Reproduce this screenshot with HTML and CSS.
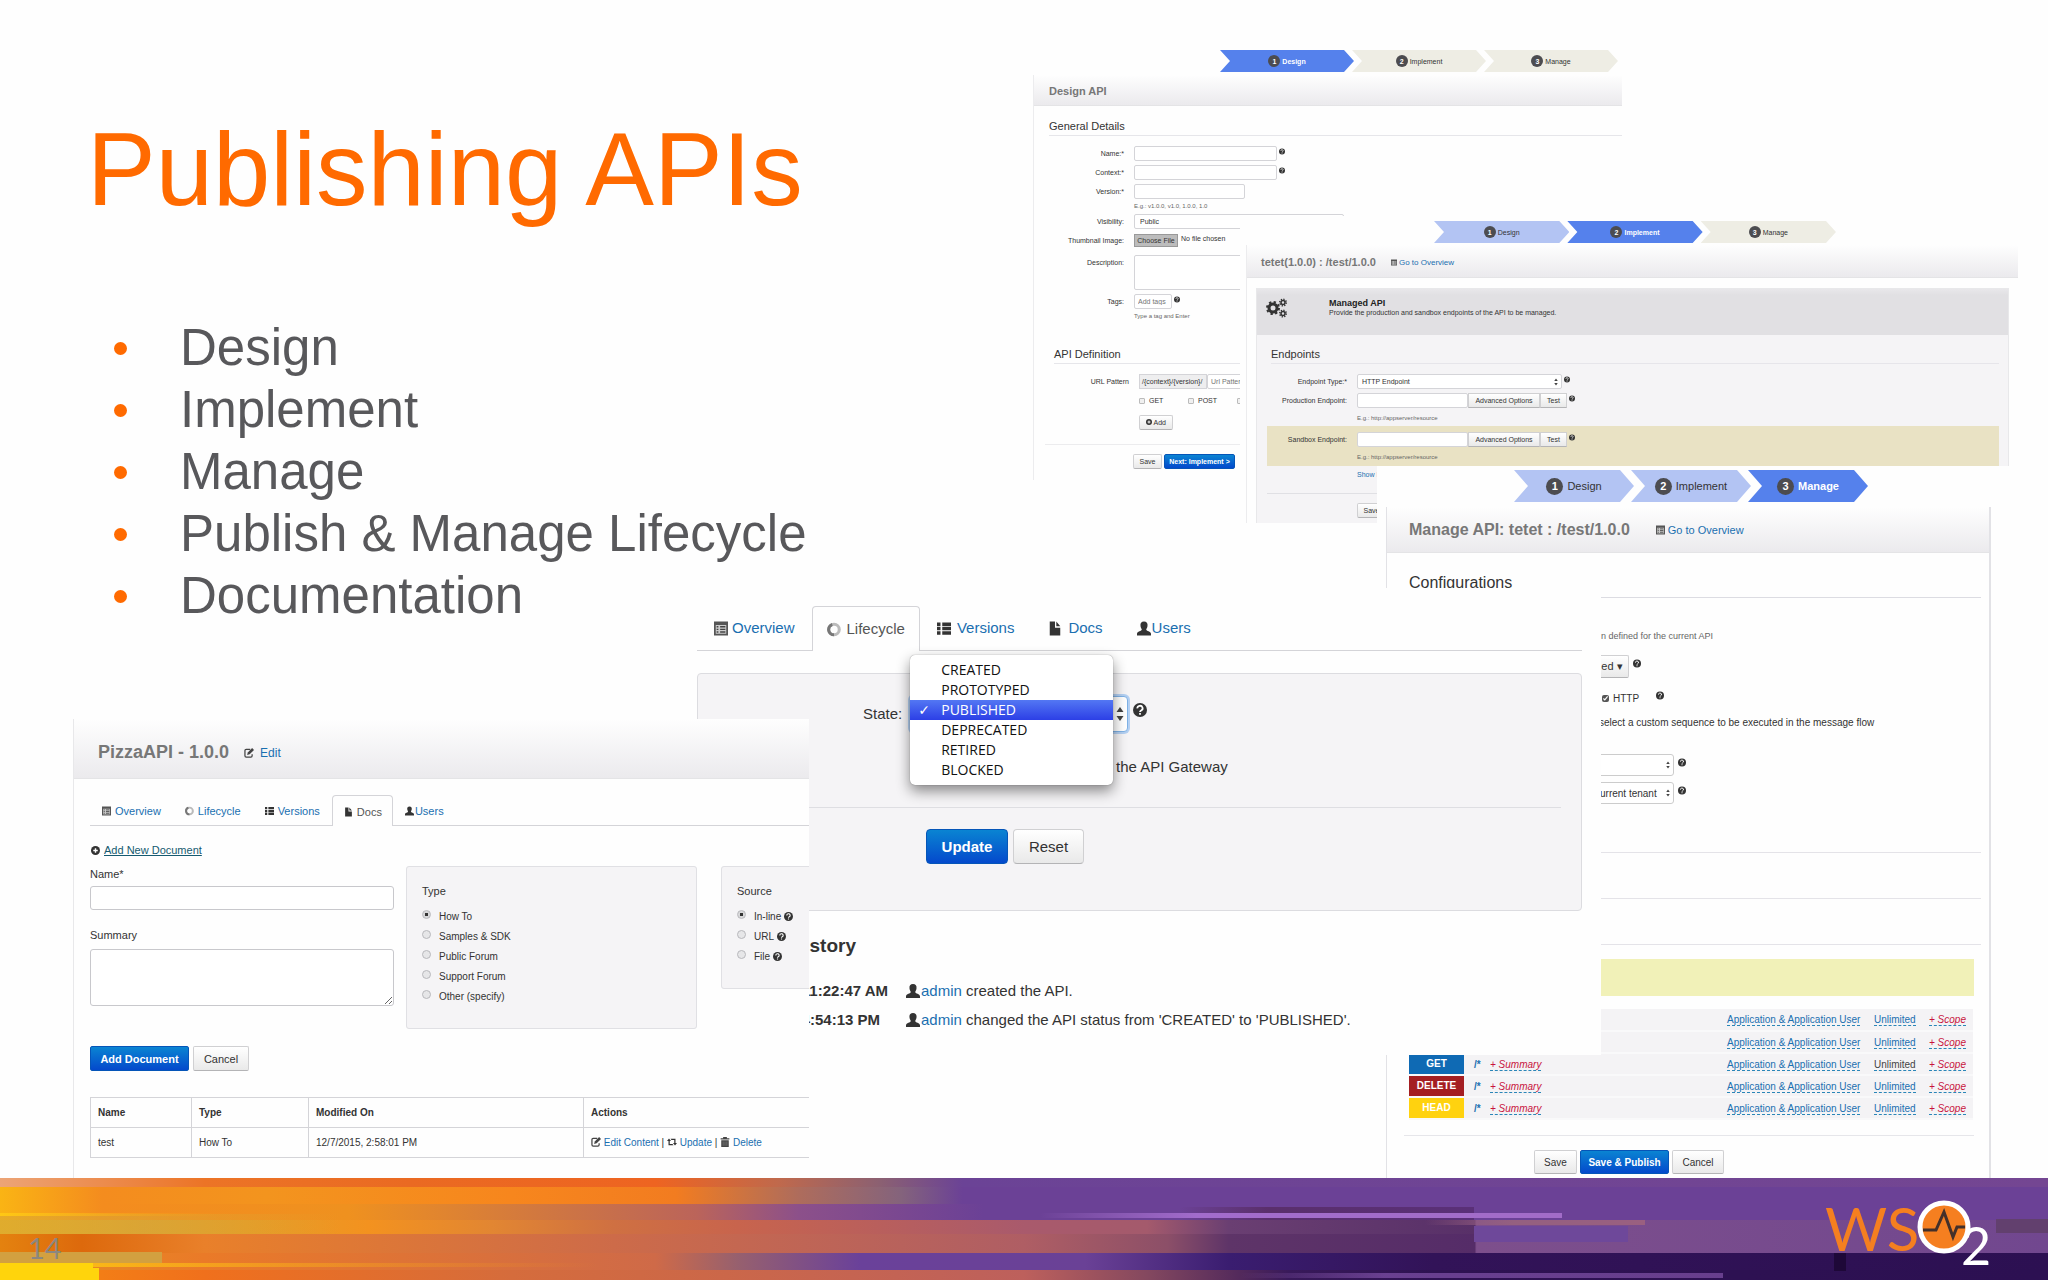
FILE: index.html
```html
<!DOCTYPE html>
<html lang="en">
<head>
  <meta charset="UTF-8" />
  <title>Publishing APIs</title>
  <link rel="stylesheet" href="styles.css">
</head>
<body>
  <!-- icons shared by all windows -->
  <svg class="sprite" aria-hidden="true">
    <symbol id="help" viewBox="0 0 16 16"><circle cx="8" cy="8" r="8" fill="#333"/><path d="M5 6.200a3 2.800 0 1 1 4.300 2.300q-1.300.7-1.300 1.800M8 11.500v2" stroke="#fff" stroke-width="2" fill="none"/></symbol>
    <symbol id="list" viewBox="0 0 16 16"><path d="M0 0h16v16H0z" fill="#555"/><path d="M2 4h12v10H2z" fill="#ccc"/><path d="M3 6h2M3 9h2M3 12h2M7 6h6M7 9h6M7 12h6" stroke="#444" stroke-width="1.500"/></symbol>
    <symbol id="spin" viewBox="0 0 16 16"><circle cx="8" cy="8" r="6" fill="none" stroke="#bbb" stroke-width="3.500"/><path d="M8 14a6 6 0 0 1-2-11.700" fill="none" stroke="#777" stroke-width="3.500"/></symbol>
    <symbol id="rows" viewBox="0 0 16 16"><path d="M0 1h4v4H0zM6 1h10v4H6zM0 6h4v4H0zM6 6h10v4H6zM0 11h4v4H0zM6 11h10v4H6z" fill="#333"/></symbol>
    <symbol id="file" viewBox="0 0 16 16"><path d="M2 0h6v7h6v9H2zM9.500 0L14 5.500H9.500z" fill="#333"/></symbol>
    <symbol id="user" viewBox="0 0 16 16"><path d="M8 0c3 0 4.500 2 4 5-.3 2-1 3-1.500 4 0 2 5.500 2 5.500 5v2H0v-2c0-3 5.500-3 5.500-5C5 8 4.300 7 4 5c-.5-3 1-5 4-5z" fill="#333"/></symbol>
    <symbol id="edit" viewBox="0 0 16 16"><path d="M10 2H3.500Q1.500 2 1.500 4v8.500q0 2 2 2H11q2 0 2-2V10" fill="none" stroke="#444" stroke-width="2"/><path d="M5 11l1-4 7-7 3 3-7 7z" fill="#444"/></symbol>
    <symbol id="plus" viewBox="0 0 16 16"><circle cx="8" cy="8" r="8" fill="#333"/><path d="M8 4v8M4 8h8" stroke="#fff" stroke-width="2.500"/></symbol>
    <symbol id="retweet" viewBox="0 0 20 16"><path d="M0 6l4-5 4 5H5.500v6H11l2 2.500H3V6zM20 10l-4 5-4-5h2.500V4H9L7 1.500h10V10z" fill="#333"/></symbol>
    <symbol id="trash" viewBox="0 0 16 16"><path d="M5 0h6v2h4v2H1V2h4zM2 5h12v11H2z" fill="#444"/><path d="M5 7v7M8 7v7M11 7v7" stroke="#888"/></symbol>
    <symbol id="updown" viewBox="0 0 8 16"><path d="M4 1l3.500 5h-7zM4 15L.5 10h7z" fill="#444"/></symbol>
    <symbol id="gears" viewBox="0 0 44 40">
      <g fill="none" stroke="#333"><circle cx="14" cy="20" r="8" stroke-width="6"/><circle cx="14" cy="20" r="12" stroke-width="4" stroke-dasharray="4.700 4.700"/>
      <circle cx="34" cy="9" r="4" stroke-width="3"/><circle cx="34" cy="9" r="6.500" stroke-width="3" stroke-dasharray="2.500 2.600"/>
      <circle cx="34" cy="31" r="4" stroke-width="3"/><circle cx="34" cy="31" r="6.500" stroke-width="3" stroke-dasharray="2.500 2.600"/></g>
    </symbol>
  </svg>

  <main class="slide">
    <div class="intro">
      <h1>Publishing APIs</h1>
      <ul>
        <li>Design</li>
        <li>Implement</li>
        <li>Manage</li>
        <li>Publish &amp; Manage Lifecycle</li>
        <li>Documentation</li>
      </ul>
    </div>

    <!-- Design window -->
    <section class="shot design">
      <ol class="stepper">
        <li class="current"><b>1</b>Design</li>
        <li class="todo"><b>2</b>Implement</li>
        <li class="todo"><b>3</b>Manage</li>
      </ol>
      <div class="window">
        <header class="bar"><h2>Design API</h2></header>
        <h3>General Details</h3>
        <form class="form">
          <div class="row"><label for="name">Name:*</label><input class="wide" id="name" type="text"><svg class="help"><use href="#help"/></svg></div>
          <div class="row"><label for="context">Context:*</label><input class="wide" id="context" type="text"><svg class="help"><use href="#help"/></svg></div>
          <div class="row"><label for="version">Version:*</label><input class="mid" id="version" type="text"></div>
          <p class="hint">E.g.: v1.0.0, v1.0, 1.0.0, 1.0</p>
          <div class="row"><label for="visibility">Visibility:</label><select class="visibility" id="visibility"><option>Public</option></select></div>
          <div class="row"><label for="thumb">Thumbnail Image:</label><button class="file-btn" id="thumb" type="button">Choose File</button><span class="file-name">No file chosen</span></div>
          <div class="row tall spaced"><label for="desc">Description:</label><textarea id="desc"></textarea></div>
          <div class="row"><label for="tags">Tags:</label><input class="tags" id="tags" type="text" placeholder="Add tags"><svg class="help"><use href="#help"/></svg></div>
          <p class="hint">Type a tag and Enter</p>
        </form>
        <h3 class="definition">API Definition</h3>
        <form class="form indent">
          <div class="row"><label for="url">URL Pattern</label><span class="addon">/{context}/{version}/</span><input class="url" id="url" type="text" placeholder="Url Pattern"></div>
          <div class="checks">
            <label><input type="checkbox">GET</label>
            <label><input type="checkbox">POST</label>
            <label><input type="checkbox">PUT</label>
          </div>
          <div class="row spaced add"><button type="button" class="btn"><svg><use href="#plus"/></svg> Add</button></div>
        </form>
        <div class="actions"><button class="btn">Save</button><button class="btn primary">Next: Implement &gt;</button></div>
      </div>
    </section>

    <!-- Implement window -->
    <section class="shot implement">
      <ol class="stepper">
        <li class="done"><b>1</b>Design</li>
        <li class="current"><b>2</b>Implement</li>
        <li class="todo"><b>3</b>Manage</li>
      </ol>
      <div class="window">
        <header class="bar"><h2>tetet(1.0.0) : /test/1.0.0</h2><svg><use href="#list"/></svg><a href="#">Go to Overview</a></header>
        <div class="panel">
          <div class="managed">
            <svg><use href="#gears"/></svg>
            <div>
              <strong>Managed API</strong>
              <p>Provide the production and sandbox endpoints of the API to be managed.</p>
            </div>
          </div>
          <h3>Endpoints</h3>
          <form class="form">
            <div class="row"><label for="etype">Endpoint Type:*</label><span class="select"><select id="etype"><option>HTTP Endpoint</option></select><svg><use href="#updown"/></svg></span><svg class="help"><use href="#help"/></svg></div>
            <div class="row"><label for="prod">Production Endpoint:</label><input id="prod" type="text"><button type="button" class="btn adv">Advanced Options</button><button type="button" class="btn test">Test</button><svg class="help"><use href="#help"/></svg></div>
            <p class="hint">E.g.: http://appserver/resource</p>
            <div class="band">
              <div class="row"><label for="sand">Sandbox Endpoint:</label><input id="sand" type="text"><button type="button" class="btn adv">Advanced Options</button><button type="button" class="btn test">Test</button><svg class="help"><use href="#help"/></svg></div>
              <p class="hint">E.g.: http://appserver/resource</p>
            </div>
            <a class="more" href="#">Show More Options</a>
          </form>
          <div class="actions"><button class="btn">Save</button></div>
        </div>
      </div>
    </section>

    <!-- Manage window -->
    <section class="shot manage">
      <ol class="stepper">
        <li class="done"><b>1</b>Design</li>
        <li class="done"><b>2</b>Implement</li>
        <li class="current"><b>3</b>Manage</li>
      </ol>
      <div class="window">
        <header class="bar"><h2>Manage API: tetet : /test/1.0.0</h2><svg><use href="#list"/></svg><a href="#">Go to Overview</a></header>
        <h3>Configurations</h3>
        <div class="config">
          <p class="note">n defined for the current API</p>
          <div class="line"><button class="btn drop">ed ▾</button><svg class="help"><use href="#help"/></svg></div>
          <div class="line http"><label><input type="checkbox" checked>HTTP</label><svg class="help"><use href="#help"/></svg></div>
          <p class="message">select a custom sequence to be executed in the message flow</p>
          <div class="line"><span class="select"><select aria-label="Sequence"><option></option></select><svg><use href="#updown"/></svg></span><svg class="help"><use href="#help"/></svg></div>
          <div class="line"><span class="select"><select aria-label="Subscriptions"><option>urrent tenant</option></select><svg><use href="#updown"/></svg></span><svg class="help"><use href="#help"/></svg></div>
        </div>
        <hr><hr><hr>
        <div class="notice"></div>
        <table class="resources">
          <tr><td><span class="verb get">POST</span></td><td><a class="path" href="#">/*</a></td><td><a class="red" href="#">+ Summary</a></td><td><a href="#">Application &amp; Application User</a></td><td><a href="#">Unlimited</a></td><td><a class="red" href="#">+ Scope</a></td></tr>
          <tr><td><span class="verb get">PUT</span></td><td><a class="path" href="#">/*</a></td><td><a class="red" href="#">+ Summary</a></td><td><a href="#">Application &amp; Application User</a></td><td><a href="#">Unlimited</a></td><td><a class="red" href="#">+ Scope</a></td></tr>
          <tr><td><span class="verb get">GET</span></td><td><a class="path" href="#">/*</a></td><td><a class="red" href="#">+ Summary</a></td><td><a href="#">Application &amp; Application User</a></td><td><a class="dark" href="#">Unlimited</a></td><td><a class="red" href="#">+ Scope</a></td></tr>
          <tr><td><span class="verb delete">DELETE</span></td><td><a class="path" href="#">/*</a></td><td><a class="red" href="#">+ Summary</a></td><td><a href="#">Application &amp; Application User</a></td><td><a href="#">Unlimited</a></td><td><a class="red" href="#">+ Scope</a></td></tr>
          <tr><td><span class="verb head">HEAD</span></td><td><a class="path" href="#">/*</a></td><td><a class="red" href="#">+ Summary</a></td><td><a href="#">Application &amp; Application User</a></td><td><a href="#">Unlimited</a></td><td><a class="red" href="#">+ Scope</a></td></tr>
        </table>
        <div class="actions"><button class="btn">Save</button><button class="btn primary">Save &amp; Publish</button><button class="btn">Cancel</button></div>
      </div>
    </section>

    <!-- Lifecycle window -->
    <section class="shot lifecycle">
      <nav class="tabs">
        <a href="#" class="overview"><svg><use href="#list"/></svg>Overview</a>
        <a href="#" class="active"><svg><use href="#spin"/></svg>Lifecycle</a>
        <a href="#"><svg><use href="#rows"/></svg>Versions</a>
        <a href="#"><svg><use href="#file"/></svg>Docs</a>
        <a href="#" class="users"><svg><use href="#user"/></svg>Users</a>
      </nav>
      <div class="panel">
        <div class="state">
          <label for="state">State:</label>
          <span class="select"><select id="state"><option>PUBLISHED</option></select><svg><use href="#updown"/></svg>
            <ul class="menu">
              <li>CREATED</li>
              <li>PROTOTYPED</li>
              <li class="picked">PUBLISHED</li>
              <li>DEPRECATED</li>
              <li>RETIRED</li>
              <li>BLOCKED</li>
            </ul>
          </span>
          <svg class="help"><use href="#help"/></svg>
        </div>
        <p class="gateway">the API Gateway</p>
        <div class="actions"><button class="btn primary">Update</button><button class="btn">Reset</button></div>
      </div>
      <h3>story</h3>
      <ul class="history">
        <li><b>11:22:47 AM</b><svg><use href="#user"/></svg><span><a href="#">admin</a> created the API.</span></li>
        <li><b class="short">4:54:13 PM</b><svg><use href="#user"/></svg><span><a href="#">admin</a> changed the API status from 'CREATED' to 'PUBLISHED'.</span></li>
      </ul>
    </section>

    <!-- Docs window -->
    <section class="shot docs">
      <header class="bar"><h2>PizzaAPI - 1.0.0</h2><svg><use href="#edit"/></svg><a href="#">Edit</a></header>
      <nav class="tabs">
        <a href="#"><svg><use href="#list"/></svg>Overview</a>
        <a href="#"><svg><use href="#spin"/></svg>Lifecycle</a>
        <a href="#"><svg><use href="#rows"/></svg>Versions</a>
        <a href="#" class="active"><svg><use href="#file"/></svg>Docs</a>
        <a href="#" class="users"><svg><use href="#user"/></svg>Users</a>
      </nav>
      <div class="add-doc"><svg><use href="#plus"/></svg><a href="#">Add New Document</a></div>
      <form class="doc-form">
        <div class="fields">
          <label for="docname">Name*</label>
          <input id="docname" type="text">
          <label for="summary">Summary</label>
          <textarea id="summary"></textarea>
        </div>
        <fieldset class="type">
          <p>Type</p>
          <label><input type="radio" name="type" checked>How To</label>
          <label><input type="radio" name="type">Samples &amp; SDK</label>
          <label><input type="radio" name="type">Public Forum</label>
          <label><input type="radio" name="type">Support Forum</label>
          <label><input type="radio" name="type">Other (specify)</label>
        </fieldset>
        <fieldset class="source">
          <p>Source</p>
          <label><input type="radio" name="source" checked>In-line <svg><use href="#help"/></svg></label>
          <label><input type="radio" name="source">URL <svg><use href="#help"/></svg></label>
          <label><input type="radio" name="source">File <svg><use href="#help"/></svg></label>
        </fieldset>
      </form>
      <div class="actions"><button class="btn primary">Add Document</button><button class="btn">Cancel</button></div>
      <table class="doc-table">
        <thead>
          <tr><th class="c-name">Name</th><th class="c-type">Type</th><th class="c-mod">Modified On</th><th>Actions</th></tr>
        </thead>
        <tbody>
          <tr><td>test</td><td>How To</td><td>12/7/2015, 2:58:01 PM</td><td><svg><use href="#edit"/></svg> <a href="#">Edit Content</a> | <svg><use href="#retweet"/></svg> <a href="#">Update</a> | <svg><use href="#trash"/></svg> <a href="#">Delete</a></td></tr>
        </tbody>
      </table>
    </section>
  </main>

  <footer class="footer">
    <svg class="streaks" viewBox="0 0 2048 102" preserveAspectRatio="none" aria-hidden="true">
      <defs>
        <linearGradient id="s1"><stop offset="0" stop-color="#eca476"/><stop offset=".1" stop-color="#ec7426"/><stop offset=".2" stop-color="#ea6a22"/><stop offset=".32" stop-color="#ee6421"/><stop offset=".38" stop-color="#c0694c"/><stop offset=".43" stop-color="#8b6072"/><stop offset=".47" stop-color="#6b4396"/><stop offset="1" stop-color="#744692"/></linearGradient>
        <linearGradient id="s2"><stop offset="0" stop-color="#fab414"/><stop offset=".05" stop-color="#f48c1e"/><stop offset=".13" stop-color="#f3941e"/><stop offset=".25" stop-color="#f7861d"/><stop offset=".33" stop-color="#f27c20"/><stop offset=".39" stop-color="#ae6c5c"/><stop offset=".44" stop-color="#84637c"/><stop offset=".47" stop-color="#6b4196"/><stop offset="1" stop-color="#6b4196"/></linearGradient>
        <linearGradient id="s3"><stop offset="0" stop-color="#fab414"/><stop offset=".05" stop-color="#f48c1e"/><stop offset=".17" stop-color="#ef911f"/><stop offset=".27" stop-color="#cf7642"/><stop offset=".34" stop-color="#bb645a"/><stop offset=".39" stop-color="#8c508a"/><stop offset=".48" stop-color="#6b4196"/><stop offset="1" stop-color="#6b4196"/></linearGradient>
        <linearGradient id="s4"><stop offset="0" stop-color="#e6b524"/><stop offset=".07" stop-color="#d9a236"/><stop offset=".12" stop-color="#e59c28"/><stop offset=".18" stop-color="#f3921f"/><stop offset=".24" stop-color="#e28632"/><stop offset=".3" stop-color="#cf7042"/><stop offset=".36" stop-color="#c8644d"/><stop offset=".5" stop-color="#a95a6c"/><stop offset=".56" stop-color="#a45a6c"/><stop offset=".6" stop-color="#6a3f72"/><stop offset=".72" stop-color="#583068"/><stop offset=".721" stop-color="#7d4f8c"/><stop offset="1" stop-color="#71478f"/></linearGradient>
        <linearGradient id="s5"><stop offset="0" stop-color="#e4820f"/><stop offset=".04" stop-color="#dd690c"/><stop offset=".1" stop-color="#e9802a"/><stop offset=".3" stop-color="#cd6b49"/><stop offset=".5" stop-color="#af5e64"/><stop offset=".57" stop-color="#8c4f68"/><stop offset=".6" stop-color="#5e3468"/><stop offset=".72" stop-color="#552c68"/><stop offset=".721" stop-color="#7d4f8c"/><stop offset="1" stop-color="#71478f"/></linearGradient>
        <linearGradient id="s6"><stop offset="0" stop-color="#e59020"/><stop offset=".1" stop-color="#ea7a28"/><stop offset=".32" stop-color="#cf6a48"/><stop offset=".36" stop-color="#97606e"/><stop offset=".42" stop-color="#6a419a"/><stop offset=".53" stop-color="#6a4196"/><stop offset=".6" stop-color="#3a1d70"/><stop offset=".7" stop-color="#321358"/><stop offset="1" stop-color="#2c1052"/></linearGradient>
        <linearGradient id="s7"><stop offset="0" stop-color="#f68a10"/><stop offset=".1" stop-color="#f0701c"/><stop offset=".25" stop-color="#d56c3c"/><stop offset=".5" stop-color="#bd605c"/><stop offset=".56" stop-color="#84485f"/><stop offset=".63" stop-color="#38195a"/><stop offset=".7" stop-color="#2e1252"/><stop offset="1" stop-color="#2c1052"/></linearGradient>
        <linearGradient id="yl"><stop offset="0" stop-color="#ffc814"/><stop offset="1" stop-color="#f3941e" stop-opacity="0"/></linearGradient>
        <linearGradient id="ol"><stop offset="0" stop-color="#dba633"/><stop offset=".4" stop-color="#dba633"/><stop offset="1" stop-color="#dba633" stop-opacity="0"/></linearGradient>
        <linearGradient id="dk"><stop offset="0" stop-color="#5a2f66" stop-opacity="0"/><stop offset=".3" stop-color="#5a2f6c"/><stop offset="1" stop-color="#5a3078"/></linearGradient>
        <linearGradient id="lt"><stop offset="0" stop-color="#a873cf" stop-opacity="0"/><stop offset=".3" stop-color="#a26ccc"/><stop offset="1" stop-color="#a26cc8"/></linearGradient>
        <linearGradient id="bg"><stop offset="0" stop-color="#9a6080" stop-opacity="0"/><stop offset=".4" stop-color="#946080"/><stop offset="1" stop-color="#9a6080"/></linearGradient>
      </defs>
      <rect width="2048" height="9" fill="url(#s1)"/>
      <rect y="9" width="2048" height="17" fill="url(#s2)"/>
      <rect y="26" width="2048" height="16" fill="url(#s3)"/>
      <rect y="42" width="2048" height="14" fill="url(#s4)"/>
      <rect y="36" width="340" height="20" fill="url(#ol)" opacity=".6"/>
      <rect y="35" width="240" height="3" fill="url(#yl)"/>
      <rect y="56" width="2048" height="19" fill="url(#s5)"/>
      <rect y="75" width="2048" height="17" fill="url(#s6)"/>
      <rect y="74" width="162" height="11" fill="#d2a040"/>
      <rect y="92" width="2048" height="10" fill="url(#s7)"/>
      <rect y="85" width="600" height="4" fill="url(#yl)"/>
      <path d="M0 85h93v5h6v12H0z" fill="#ffd40c"/>
      <rect x="1180" y="29" width="294" height="13" fill="url(#dk)"/>
      <rect x="1040" y="35" width="522" height="5" fill="url(#lt)"/>
      <rect x="1425" y="42" width="220" height="5" fill="url(#bg)"/>
      <rect x="1474" y="48" width="154" height="16" fill="#6e489a"/>
      <rect x="1996" y="41" width="52" height="14" fill="#62406e"/>
      <rect x="1834" y="75" width="12" height="18" fill="#1e0838"/>
      <rect x="1240" y="95" width="483" height="5" fill="url(#lt)" opacity=".5"/>
    </svg>
    <span class="page-no">14</span>
    <svg class="logo" viewBox="0 0 170 90" role="img" aria-label="WSO2">
      <text class="logo-ws" x="0" y="62">WS</text>
      <text class="logo-two" x="136" y="76">2</text>
      <circle cx="119" cy="38" r="24" fill="#f57f20" stroke="#fff" stroke-width="5"/>
      <path d="M98 41h13l8-18 9 25 4-10h8" fill="none" stroke="#43302a" stroke-width="3"/>
    </svg>
  </footer>
</body>
</html>
```
FILE: styles.css
```css
* {
  box-sizing: border-box;
}

body {
  margin: 0;
  min-height: 100vh;
  display: flex;
  flex-direction: column;
  background: #fefefe;
  color: #333;
  font-family: "Liberation Sans", Arial, sans-serif;
  overflow-x: hidden;
}

h1, h2, h3, p, ul, ol, fieldset {
  margin: 0;
  padding: 0;
  border: 0;
}

ul, ol {
  list-style: none;
}

a {
  color: #1a6fb0;
  text-decoration: none;
}

button, input, select, textarea {
  font: inherit;
  color: inherit;
}

.sprite {
  position: absolute;
  width: 0;
  height: 0;
}

/* slide text */
.slide {
  position: relative;
  flex: 1;
}

.intro {
  padding: 110px 0 0 87px;
}

.intro h1 {
  font-size: 103px;
  line-height: 120px;
  font-weight: normal;
  color: #ff6a00;
}

.intro ul {
  padding: 87px 0 0 27px;
}

.intro li {
  display: flex;
  align-items: center;
  gap: 53px;
  font-size: 51px;
  line-height: 62px;
  color: #58585b;
}

.intro li::before {
  content: "";
  width: 13px;
  height: 13px;
  border-radius: 50%;
  background: #ff6a00;
}

/* windows scattered over the slide */
.shot {
  position: absolute;
  overflow: hidden;
  background: #fefefe;
}

.design {
  top: 45px;
  right: 426px;
  width: 589px;
  height: 435px;
  font-size: 7px;
}

.implement {
  top: 216px;
  right: 30px;
  width: 778px;
  height: 307px;
  font-size: 7px;
}

.manage {
  top: 466px;
  right: 20px;
  width: 651px;
  height: 712px;
  font-size: 10px;
}

.lifecycle {
  top: 588px;
  left: 697px;
  width: 904px;
  height: 467px;
  font-size: 15px;
}

.docs {
  top: 719px;
  left: 73px;
  width: 736px;
  height: 459px;
  font-size: 11px;
  border-left: 1px solid #e8e8ea;
}

/* shared parts */
.bar {
  display: flex;
  align-items: center;
  background: linear-gradient(#fefefe, #ebeaed);
  border-bottom: 1px solid #e4e4e6;
}

.bar h2 {
  color: #777;
  font-weight: bold;
}

h3 {
  display: flex;
  align-items: flex-end;
  font-weight: normal;
}

.stepper {
  display: flex;
}

.stepper li {
  flex: 1;
  display: flex;
  align-items: center;
  justify-content: center;
  margin-right: -2px;
  clip-path: polygon(0 0, calc(100% - 10px) 0, 100% 50%, calc(100% - 10px) 100%, 0 100%, 10px 50%);
}

.stepper b {
  display: flex;
  align-items: center;
  justify-content: center;
  width: 12px;
  height: 12px;
  margin-right: 2px;
  border-radius: 50%;
  background: #4c4c50;
  color: #fff;
}

.stepper .current {
  background: #5581ec;
  color: #fff;
  font-weight: bold;
}

.stepper .done {
  background: #b3c4f3;
}

.stepper .todo {
  background: #eeede4;
}

.btn {
  padding: 0;
  border: 1px solid #d0d0d2;
  border-bottom-color: #b4b4b6;
  border-radius: 2px;
  background: linear-gradient(#fff, #e9e9e9);
  white-space: nowrap;
}

.btn.primary {
  border-color: #0555b8;
  background: linear-gradient(#0a84d2, #0449cc);
  color: #fff;
  font-weight: bold;
}

.form .row {
  display: flex;
  align-items: center;
  height: 15px;
  margin-bottom: 4px;
}

.form .row.spaced {
  margin-top: 7px;
}

.form input[type="text"], .form select, .form textarea {
  height: 15px;
  padding: 0 5px;
  border: 1px solid #d4d4d8;
  border-radius: 2px;
  background: #fff;
  appearance: none;
  resize: none;
}

.help {
  width: 6px;
  height: 7px;
  margin: 0 0 4px 2px;
}

.hint {
  font-size: 6px;
  color: #666;
}

.select {
  position: relative;
  display: inline-flex;
}

.select > svg {
  position: absolute;
  top: 50%;
  right: 4px;
  width: 4px;
  height: 8px;
  margin-top: -4px;
}

/* design */
.design .stepper {
  width: 396px;
  height: 22px;
  margin: 5px 0 3px 187px;
}

.design .window {
  height: 405px;
  border-left: 1px solid #ececee;
}

.design .bar {
  height: 31px;
  padding: 2px 0 0 15px;
}

.design h2, .design h3, .implement h2, .implement h3 {
  font-size: 11px;
}

.design h3 {
  height: 30px;
  margin: 0 0 10px 15px;
  padding-bottom: 3px;
  border-bottom: 1px solid #e6e6ea;
}

.design h3.definition {
  height: 40px;
  margin: 0 0 10px 20px;
}

.design .row > label {
  width: 90px;
  margin-right: 10px;
  text-align: right;
}

.design .indent .row > label {
  width: 95px;
}

.design .wide {
  width: 143px;
}

.design .mid {
  width: 111px;
}

.design .visibility {
  width: 210px;
}

.design .hint {
  margin: 0 0 4px 100px;
  line-height: 7px;
}

.design .file-btn {
  width: 44px;
  height: 13px;
  padding: 0;
  border: 1px solid #999;
  background: #bcbcbc;
}

.design .file-name {
  margin: 0 0 4px 3px;
}

.design .tall {
  height: 35px;
  align-items: flex-start;
}

.design .tall label {
  line-height: 15px;
}

.design textarea {
  width: 210px;
  height: 35px;
}

.design .form .tags {
  width: 38px;
  padding: 0 3px;
}

.design .addon {
  width: 68px;
  height: 15px;
  padding: 0 2px;
  border: 1px solid #d4d4d8;
  background: #eeeeef;
  line-height: 13px;
}

.design .form .url {
  width: 110px;
  padding: 0 3px;
}

.checks {
  display: flex;
  height: 15px;
  padding-left: 105px;
}

.checks label {
  display: flex;
  align-items: center;
  width: 49px;
}

.checks input {
  appearance: none;
  width: 6px;
  height: 6px;
  margin: 0 4px 0 0;
  border: 1px solid #bbb;
  border-radius: 1px;
  background: #f0f0f0;
}

.design .add {
  padding-left: 105px;
}

.design .add .btn {
  width: 34px;
  height: 15px;
}

.design .add svg {
  width: 6px;
  height: 6px;
}

.design .actions {
  display: flex;
  gap: 2px;
  margin: 14px 0 0 11px;
  padding: 9px 0 0 88px;
  border-top: 1px solid #ececee;
}

.design .actions .btn {
  width: 29px;
  height: 15px;
}

.design .actions .primary {
  width: 71px;
}

/* implement */
.implement .stepper {
  width: 400px;
  height: 22px;
  margin: 5px 0 2px 194px;
}

.implement .window {
  margin-left: 6px;
  border-left: 1px solid #ececee;
}

.implement .bar {
  height: 33px;
  padding: 2px 0 0 14px;
}

.implement .bar svg {
  width: 6px;
  height: 7px;
  margin: 0 2px 0 15px;
}

.implement .bar a {
  font-size: 8px;
}

.implement .panel {
  height: 240px;
  margin: 10px 9px 0 9px;
  border: 1px solid #e8e8ea;
  background: #f5f4f6;
}

.implement .managed {
  display: flex;
  align-items: flex-start;
  gap: 41px;
  height: 46px;
  padding: 9px 9px;
  background: linear-gradient(#e8e7ea, #e1e0e3 6px);
}

.implement .managed svg {
  width: 22px;
  height: 20px;
}

.implement .managed strong {
  display: block;
  font-size: 9px;
  line-height: 10px;
  color: #222;
}

.implement .managed p {
  line-height: 9px;
}

.implement h3 {
  height: 29px;
  margin: 0 9px 10px 14px;
  padding-bottom: 3px;
  border-bottom: 1px solid #e6e5ea;
}

.implement .row label {
  width: 90px;
  margin-right: 10px;
  text-align: right;
}

.implement .select select {
  width: 205px;
  padding: 0 4px;
}

.implement .row input {
  width: 111px;
}

.implement .row .btn {
  height: 15px;
  border-radius: 0;
}

.implement .row .adv {
  width: 72px;
}

.implement .row .test {
  width: 27px;
}

.implement .hint {
  padding-left: 100px;
  line-height: 13px;
}

.implement .band {
  height: 40px;
  margin: 1px 9px 0 10px;
  padding: 6px 0 0 0;
  background: #e9e2c4;
}

.implement .band label {
  width: 80px;
}

.implement .band .hint {
  padding-left: 90px;
}

.implement .more {
  display: block;
  padding-left: 100px;
  line-height: 17px;
}

.implement .actions {
  margin: 10px 9px 0 10px;
  padding: 9px 0 0 90px;
  border-top: 1px solid #e0e0e4;
}

.implement .actions .btn {
  width: 29px;
  height: 15px;
}

/* manage */
.manage .stepper {
  width: 351px;
  height: 32px;
  margin: 4px 0 5px 137px;
  font-size: 11px;
}

.manage .stepper li {
  margin-right: -3px;
  clip-path: polygon(0 0, calc(100% - 14px) 0, 100% 50%, calc(100% - 14px) 100%, 0 100%, 14px 50%);
}

.manage .stepper b {
  width: 17px;
  height: 17px;
  margin-right: 4px;
}

.manage .window {
  width: 605px;
  height: 680px;
  margin-left: 9px;
  border: 1px solid #e2e2e6;
  border-width: 0 2px 0 1px;
}

.manage .bar {
  height: 46px;
  padding-left: 22px;
}

.manage .bar h2, .manage h3 {
  font-size: 16px;
}

.manage .bar svg {
  width: 9px;
  height: 10px;
  margin: 0 3px 0 26px;
}

.manage .bar a {
  font-size: 11px;
}

.manage h3 {
  height: 45px;
  margin: 0 8px 0 22px;
  padding-bottom: 5px;
  border-bottom: 1px solid #dcdce2;
}

.manage .config {
  height: 254px;
  padding: 28px 0 0 214px;
}

.manage .note {
  font-size: 9px;
  line-height: 20px;
  color: #666;
}

.manage .line {
  display: flex;
  align-items: center;
  height: 22px;
  margin-top: 9px;
}

.manage .help {
  width: 8px;
  height: 9px;
  margin: 0 0 6px 4px;
}

.manage .drop {
  width: 34px;
  height: 23px;
  margin-left: -6px;
  font-size: 11px;
}

.manage .line.http .help {
  margin-left: 17px;
}

.manage .http label {
  display: flex;
  align-items: center;
}

.manage .http input {
  width: 7px;
  height: 7px;
  margin: 0 4px 0 1px;
  accent-color: #555;
}

.manage .message {
  margin: 4px 0 21px -2px;
  line-height: 20px;
}

.manage .line + .line {
  margin-top: 6px;
}

.manage .line + .line.http {
  margin-top: 10px;
}

.manage .line select {
  width: 80px;
  height: 22px;
  margin-left: -7px;
  padding: 0 4px 0 5px;
  border: 1px solid #ccc;
  border-radius: 3px;
  background: #fff;
  appearance: none;
}

.manage hr {
  height: 1px;
  margin: 0 8px 45px 214px;
  border: 0;
  background: #e4e3e8;
}

.manage hr:last-of-type {
  margin-bottom: 14px;
}

.manage .notice {
  height: 37px;
  margin: 0 15px 13px 214px;
  background: #f1f1b8;
}

.resources {
  width: 564px;
  margin-left: 22px;
  border-collapse: collapse;
  table-layout: fixed;
  background: #f4f3f5;
}

.resources td {
  height: 22px;
  padding: 0;
  border-bottom: 2px solid #f9f9fa;
  white-space: nowrap;
}

.resources td:nth-child(1) { width: 65px; }
.resources td:nth-child(2) { width: 16px; }
.resources td:nth-child(3) { width: 237px; }
.resources td:nth-child(4) { width: 147px; }
.resources td:nth-child(5) { width: 55px; }

.resources a {
  border-bottom: 1px dashed #2a86b8;
}

.resources .path {
  border: 0;
  font-weight: bold;
}

.resources .red {
  color: #c8143c;
  font-style: italic;
}

.resources .dark {
  color: #444;
}

.verb {
  display: block;
  width: 55px;
  height: 20px;
  line-height: 19px;
  text-align: center;
  font-weight: bold;
  color: #fff;
}

.verb.get { background: #0f6ab4; }
.verb.delete { background: #a41e22; }
.verb.head { background: #ffd20f; }

.manage .actions {
  display: flex;
  gap: 3px;
  margin: 15px 15px 0 17px;
  padding: 14px 0 0 130px;
  border-top: 1px solid #e6e6ea;
}

.manage .actions .btn {
  width: 52px;
  height: 24px;
}

.manage .actions .btn:first-child {
  width: 43px;
}

.manage .actions .primary {
  width: 89px;
}

/* tabs */
.tabs {
  display: flex;
  border-bottom: 1px solid #d4d4d8;
}

.tabs a {
  display: flex;
  align-items: center;
}

.tabs .active {
  margin-bottom: -1px;
  border: 1px solid #d4d4d8;
  border-bottom: 0;
  border-radius: 4px 4px 0 0;
  background: #fefefe;
  color: #555;
}

/* lifecycle */
.lifecycle .tabs {
  width: 885px;
  height: 45px;
  margin-top: 18px;
}

.lifecycle .tabs a {
  padding: 0 17px;
}

.lifecycle .tabs .active {
  padding: 0 14px;
}

.lifecycle .tabs svg {
  width: 14px;
  height: 15px;
  margin-right: 6px;
}

.lifecycle .tabs .overview svg {
  margin-right: 4px;
}

.lifecycle .tabs .users svg {
  margin-right: 1px;
}

.lifecycle .panel {
  width: 885px;
  height: 238px;
  margin-top: 22px;
  border: 1px solid #dcdce0;
  border-radius: 4px;
  background: #f5f4f6;
}

.state {
  display: flex;
  align-items: center;
  height: 80px;
  padding-left: 165px;
}

.state label {
  margin-right: 8px;
}

.state select {
  width: 218px;
  height: 36px;
  border: 1px solid #7fb2e6;
  border-radius: 4px;
  background: #fff;
  box-shadow: 0 0 0 2px #b4d0f2;
  appearance: none;
}

.state .select > svg {
  width: 8px;
  height: 16px;
  margin-top: -8px;
}

.state .help {
  width: 14px;
  height: 14px;
  margin: 0 0 8px 5px;
}

.lifecycle, .state {
  line-height: 18px;
}

.menu {
  position: absolute;
  top: -41px;
  left: 0;
  width: 203px;
  padding: 5px 0;
  border-radius: 5px;
  background: #fff;
  box-shadow: 0 6px 14px rgba(0,0,0,0.45), 0 0 1px rgba(0,0,0,0.5);
  font-family: "Open Sans", sans-serif;
  font-size: 14px;
  color: #111;
}

.menu li {
  height: 20px;
  padding-left: 31px;
  line-height: 20px;
}

.menu .picked {
  padding-left: 8px;
  background: linear-gradient(#5377f3, #2c3fe6);
  color: #fff;
}

.menu .picked::before {
  content: "✓";
  display: inline-block;
  width: 23px;
  font-family: "DejaVu Sans", sans-serif;
  font-weight: bold;
}

.gateway {
  padding: 4px 0 0 418px;
}

.lifecycle .actions {
  display: flex;
  gap: 5px;
  margin: 31px 20px 0 0;
  padding: 21px 0 0 228px;
  border-top: 1px solid #dedee2;
}

.lifecycle .btn {
  width: 71px;
  height: 35px;
  border-radius: 4px;
}

.lifecycle .btn.primary {
  width: 82px;
}

.lifecycle h3 {
  width: 159px;
  margin-top: 21px;
  justify-content: flex-end;
  font-size: 19px;
  line-height: 28px;
  font-weight: bold;
}

.history {
  padding: 16px 0 0 28px;
}

.history li {
  display: flex;
  align-items: center;
  height: 29px;
}

.history b {
  width: 181px;
  padding-right: 18px;
  text-align: right;
}

.history .short {
  padding-right: 26px;
}

.history svg {
  width: 14px;
  height: 14px;
  margin-right: 1px;
}

/* docs */
.docs .bar {
  height: 60px;
  padding: 8px 0 0 24px;
}

.docs .bar h2 {
  font-size: 18px;
}

.docs .bar svg {
  width: 10px;
  height: 10px;
  margin: 0 6px 0 15px;
}

.docs .bar a {
  font-size: 12px;
}

.docs .tabs {
  height: 31px;
  margin: 16px 0 0 16px;
}

.docs .tabs a {
  padding: 2px 12px 0;
}

.docs .tabs .active {
  padding: 2px 10px 0 11px;
}

.docs .tabs svg {
  width: 9px;
  height: 10px;
  margin-right: 4px;
}

.docs .tabs .users svg {
  margin-right: 1px;
}

.add-doc {
  display: flex;
  align-items: center;
  gap: 4px;
  height: 16px;
  margin: 16px 0 8px 17px;
}

.add-doc svg {
  width: 9px;
  height: 9px;
}

.add-doc a {
  color: #155a70;
  text-decoration: underline;
}

.doc-form {
  display: flex;
  align-items: flex-start;
  height: 180px;
  padding-left: 16px;
}

.fields {
  flex: none;
  display: flex;
  flex-direction: column;
  width: 304px;
  margin-right: 12px;
}

.fields label {
  line-height: 16px;
}

.fields input, .fields textarea {
  height: 24px;
  margin: 4px 0 17px;
  border: 1px solid #c8c8cc;
  border-radius: 3px;
  background: #fff;
}

.fields textarea {
  height: 57px;
  margin-top: 6px;
}

.doc-form fieldset {
  flex: none;
  width: 291px;
  height: 163px;
  padding: 15px;
  border: 1px solid #e0e0e4;
  border-radius: 3px;
  background: #f5f4f6;
}

.doc-form .source {
  height: 123px;
  margin-left: 24px;
}

.doc-form fieldset p {
  margin-bottom: 6px;
  line-height: 18px;
}

.doc-form fieldset label {
  display: flex;
  align-items: center;
  height: 20px;
  font-size: 10px;
}

.doc-form fieldset svg {
  width: 9px;
  height: 9px;
  margin-left: 3px;
}

.doc-form input[type="radio"] {
  appearance: none;
  width: 9px;
  height: 9px;
  margin: 0 8px 3px 0;
  border: 1px solid #b8b8bc;
  border-radius: 50%;
  background: #e6e6e8;
}

.doc-form input[type="radio"]:checked {
  background: radial-gradient(#333 30%, #d8d8da 40%);
}

.docs .actions {
  display: flex;
  gap: 4px;
  padding-left: 16px;
}

.docs .btn {
  width: 56px;
  height: 25px;
}

.docs .btn.primary {
  width: 99px;
}

.doc-table {
  width: 760px;
  margin: 26px 0 0 16px;
  border-collapse: collapse;
  font-size: 10px;
}

.doc-table th, .doc-table td {
  height: 30px;
  padding: 0 7px;
  border: 1px solid #d4d4d8;
  text-align: left;
}

.doc-table .c-name { width: 101px; }
.doc-table .c-type { width: 117px; }
.doc-table .c-mod { width: 275px; }

.doc-table svg {
  width: 10px;
  height: 10px;
  vertical-align: -1px;
}

/* footer */
.footer {
  position: relative;
  display: flex;
  align-items: center;
  justify-content: space-between;
  height: 102px;
  padding: 0 53px 0 28px;
  background: #6b4196;
}

.streaks {
  position: absolute;
  inset: 0;
  width: 100%;
  height: 100%;
}

.page-no {
  position: relative;
  padding-top: 36px;
  font-family: Lato, sans-serif;
  font-size: 29px;
  color: #8b8780;
}

.logo {
  position: relative;
  width: 170px;
  height: 90px;
  margin-top: 10px;
}

.logo text {
  font-family: Lato, sans-serif;
}

.logo-ws {
  font-size: 60px;
  fill: #f57f20;
}

.logo-two {
  font-size: 52px;
  fill: #fff;
}
```
